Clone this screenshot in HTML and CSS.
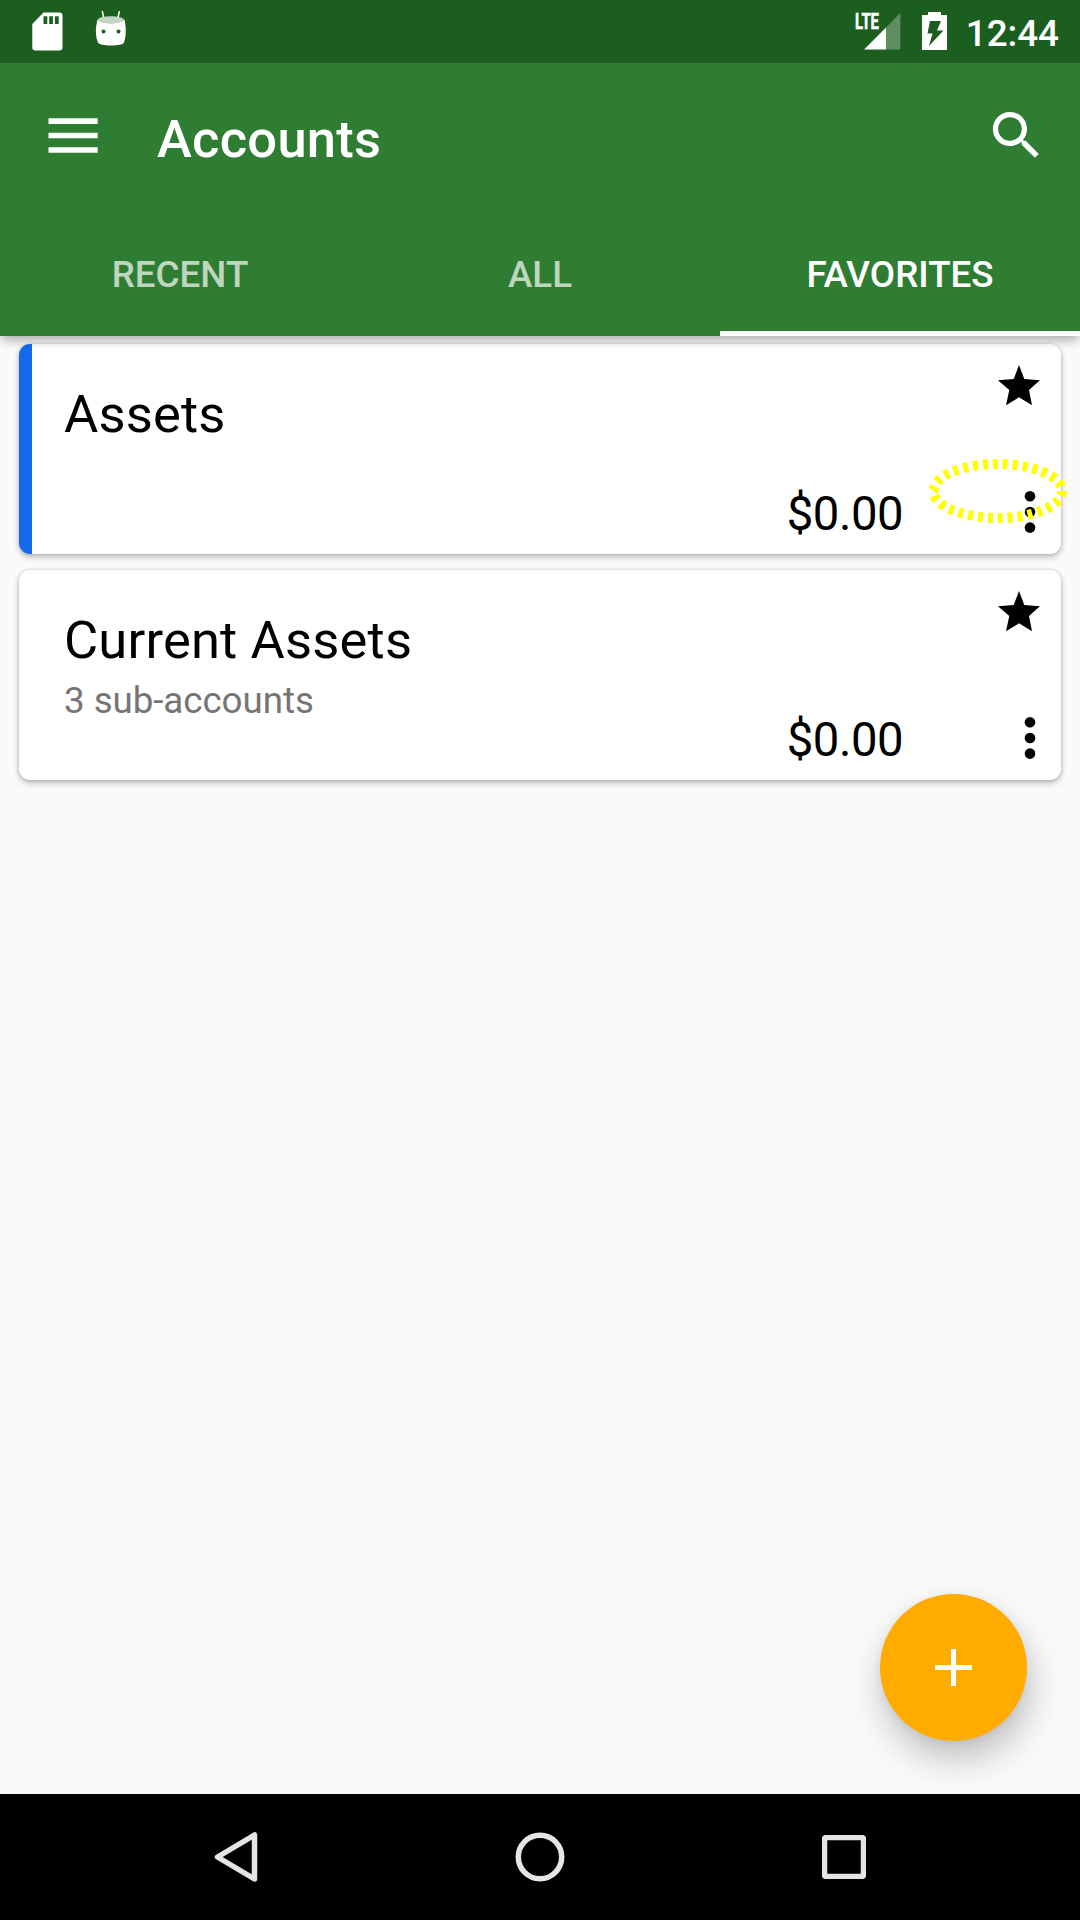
FILE: index.html
```html
<!DOCTYPE html>
<html lang="en">
<head>
<meta charset="utf-8">
<title>Accounts</title>
<link rel="stylesheet" href="styles.css">
</head>
<body>
<div class="screen">
  <header class="app-header">
    <div class="status-bar">
      <div class="status-group">
        <svg class="status-icon" width="31" height="39" viewBox="0 0 31 39"><path fill="#fff" fill-rule="evenodd" d="M11.500 .5H27.500a3 3 0 0 1 3 3V35.500a3 3 0 0 1-3 3H3.300a3 3 0 0 1-3-3V12zM11.500 4.300v7.700h3.800V4.300zM17.200 4.300v7.700h3.700V4.300zM22.900 4.300v7.700h3.800V4.300z"/></svg>
        <svg class="status-icon droid" width="32" height="39" viewBox="0 0 32 39">
          <path d="M7.300 0 8.800 7.500M24.500 0 22.800 7.500" stroke="#fff" stroke-width="1.500"/>
          <path fill="#fff" d="M2.500 8.500C8 13.500 24 13.500 29.500 8.500C31.300 17 31.300 25 29 31.500C28.500 35.500 3.500 35.500 3 31.500C.3 25 .3 17 2.500 8.500Z"/>
          <ellipse cx="15.800" cy="8.700" rx="13" ry="3.500" fill="#c3d5c4"/>
          <circle cx="8.500" cy="20.500" r="2" fill="#1b5e20"/><circle cx="23.500" cy="20.500" r="2" fill="#1b5e20"/>
        </svg>
      </div>
      <div class="status-group right">
        <svg class="signal" width="46" height="38" viewBox="0 0 46 38">
          <path fill="#fff" fill-opacity=".3" d="M31 15.500 45.300 1V37.500H31z"/>
          <path fill="#fff" d="M9 37.500 31 15.500V37.500z"/>
          <text class="lte" x="0" y="17" textLength="24" lengthAdjust="spacingAndGlyphs">LTE</text>
        </svg>
        <svg class="battery" width="25" height="38" viewBox="0 0 25 38"><path fill="#fff" fill-rule="evenodd" d="M6 0H19V3H25V38H0V3H6zM8 9 5.500 21.500H10.500L7 34 21.500 18.500H15L19 9z"/></svg>
        <span class="clock">12:44</span>
      </div>
    </div>
    <div class="toolbar">
      <svg class="menu-icon" width="50" height="35" viewBox="0 0 50 35"><path fill="#fff" d="M.5 .3H49.700V6H.5zM.5 14.800H49.700V20.300H.5zM.5 29.200H49.700V34.800H.5z"/></svg>
      <h1 class="title">Accounts</h1>
      <svg class="search-icon" width="63" height="63" viewBox="0 0 24 24"><path fill="#fff" d="M15.500 14h-.79l-.28-.27C15.410 12.590 16 11.110 16 9.500 16 5.910 13.090 3 9.500 3S3 5.910 3 9.500 5.910 16 9.500 16c1.610 0 3.090-.59 4.230-1.570l.27.28v.79l5 4.990L20.490 19l-4.990-5zm-6 0C7.010 14 5 11.990 5 9.500S7.010 5 9.500 5 14 7.010 14 9.500 11.990 14 9.500 14z"/></svg>
    </div>
    <nav class="tabs">
      <span class="tab">RECENT</span>
      <span class="tab">ALL</span>
      <span class="tab active">FAVORITES</span>
    </nav>
  </header>

  <main class="content">
    <article class="card colored">
      <div class="info">
        <h2 class="name">Assets</h2>
      </div>
      <span class="amount">$0.00</span>
      <div class="actions">
        <svg class="star" width="42" height="41" viewBox="0 0 42 41"><path d="M21 0 26.300 14 42 15.300 31 25 34 40.300 21 32.300 8 40.300 11.300 25 0 15.300 15.700 14z"/></svg>
        <svg class="more" width="12" height="44" viewBox="0 0 12 44"><circle cx="6" cy="6.300" r="5.300"/><circle cx="6" cy="22" r="5.300"/><circle cx="6" cy="37.600" r="5.300"/></svg>
      </div>
      <svg class="marker" width="140" height="66" viewBox="0 0 140 66"><ellipse cx="69.800" cy="33" rx="64.300" ry="27" pathLength="300"/></svg>
    </article>
    <article class="card">
      <div class="info">
        <h2 class="name">Current Assets</h2>
        <p class="sub">3 sub-accounts</p>
      </div>
      <span class="amount">$0.00</span>
      <div class="actions">
        <svg class="star" width="42" height="41" viewBox="0 0 42 41"><path d="M21 0 26.300 14 42 15.300 31 25 34 40.300 21 32.300 8 40.300 11.300 25 0 15.300 15.700 14z"/></svg>
        <svg class="more" width="12" height="44" viewBox="0 0 12 44"><circle cx="6" cy="6.300" r="5.300"/><circle cx="6" cy="22" r="5.300"/><circle cx="6" cy="37.600" r="5.300"/></svg>
      </div>
    </article>
    <div class="fab">
      <svg width="37" height="37" viewBox="0 0 37 37"><path fill="#fff" d="M16 0h5v16h16v5H21v16h-5V21H0v-5h16z"/></svg>
    </div>
  </main>

  <footer class="nav-bar">
    <svg width="44" height="52" viewBox="0 0 44 52"><path d="M40.500 4V48L3.500 26z" /></svg>
    <svg width="50" height="50" viewBox="0 0 50 50"><circle cx="25" cy="25" r="21.700"/></svg>
    <svg width="44" height="44" viewBox="0 0 44 44"><rect x="2.500" y="2.500" width="39" height="39" rx="1.500"/></svg>
  </footer>
</div>
</body>
</html>
```
FILE: styles.css
```css
* { box-sizing: border-box; }
body { margin: 0; font-family: Roboto, sans-serif; background: #fafafa; }
h1, h2, p { margin: 0; font-weight: 400; }
svg { display: block; flex: none; }

.screen { width: 1080px; height: 1920px; display: flex; flex-direction: column; overflow: hidden; }

.app-header { position: relative; z-index: 1; height: 336px; flex: none; background: #2e7d32; color: #fff; box-shadow: 0 7px 9px -2px rgba(0, 0, 0, .28); }
.status-bar { height: 63px; display: flex; justify-content: space-between; background: #1b5e20; padding: 0 21px 0 32px; }
.status-group { display: flex; gap: 32px; padding-top: 12px; }
.droid { margin-top: -1px; }
.status-group.right { gap: 0; }
.signal { overflow: visible; }
.battery { margin-left: 21px; }
.lte { font: 700 22.500px Roboto, sans-serif; fill: #fff; stroke: #fff; stroke-width: .6; }
.clock { margin-left: 19px; padding-top: 1px; font-size: 36.750px; font-weight: 500; line-height: 42px; }

.toolbar { height: 147px; display: flex; align-items: flex-start; padding: 41px 32px 0 48px; }
.menu-icon { margin-top: 14px; }
.title { flex: 1; margin-left: 59px; padding-top: 4px; font-size: 52.500px; font-weight: 500; line-height: 62px; letter-spacing: .25px; }

.tabs { height: 126px; display: grid; grid-template-columns: repeat(3, 1fr); }
.tab { display: flex; align-items: center; justify-content: center; padding-top: 2px; font-size: 36.750px; font-weight: 500; color: rgba(255, 255, 255, .7); }
.tab.active { color: #fff; box-shadow: inset 0 -5px #fff; }

.content { position: relative; flex: 1; display: flex; flex-direction: column; gap: 16px; padding: 8px 19px; }
.card { position: relative; height: 210px; display: flex; background: #fff; border-radius: 11px; padding-left: 45px; color: #000; box-shadow: 0 3px 6px rgba(0, 0, 0, .26), 0 0 3px rgba(0, 0, 0, .16); }
.card.colored { background: linear-gradient(to right, #1569eb 13px, #fff 13px); }
.info { flex: 1; padding-top: 39px; }
.name { font-size: 52.500px; line-height: 62px; letter-spacing: .17px; }
.sub { font-size: 36.750px; line-height: 43px; color: #757575; padding-top: 8px; letter-spacing: -.07px; }
.amount { align-self: flex-end; font-size: 47.250px; line-height: 56px; padding-bottom: 12px; letter-spacing: -.5px; }
.actions { width: 158px; display: flex; flex-direction: column; align-items: flex-end; justify-content: space-between; padding: 21px 21px 20px 0; }
.more { margin-right: 4px; }
.marker { position: absolute; left: 909px; top: 114px; fill: none; stroke: #ff0; stroke-width: 10; stroke-dasharray: 5 5; }

.fab { position: absolute; left: 880px; top: 1258px; width: 147px; height: 147px; border-radius: 50%; background: #ffab00; display: flex; align-items: center; justify-content: center; box-shadow: 3px 18px 36px rgba(0, 0, 0, .24), 0 2px 10px rgba(0, 0, 0, .06); }

.nav-bar { position: relative; z-index: 1; height: 126px; flex: none; background: #000; display: flex; align-items: center; justify-content: space-between; padding: 0 214px 0 214px; fill: none; stroke: #e5e5e5; stroke-width: 5.500; stroke-linejoin: round; }
```
